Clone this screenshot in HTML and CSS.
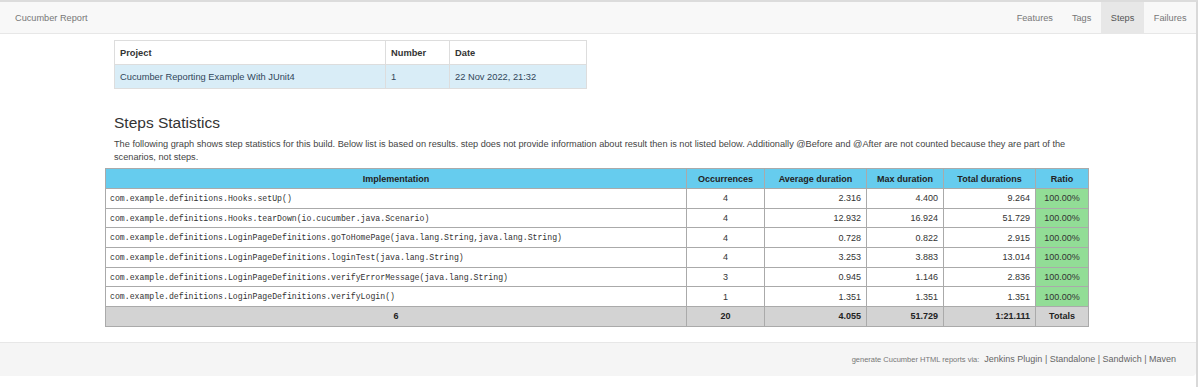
FILE: index.html
```html
<!DOCTYPE html>
<html>
<head>
<meta charset="utf-8">
<link rel="stylesheet" href="styles.css">
</head>
<body>
<div class="page">
  <nav class="navbar">
    <span class="brand">Cucumber Report</span>
    <ul class="nav">
      <li><a>Features</a></li>
      <li><a>Tags</a></li>
      <li class="active"><a>Steps</a></li>
      <li><a>Failures</a></li>
    </ul>
  </nav>

  <section class="report">
    <table class="project">
      <thead>
        <tr><th class="c-proj">Project</th><th class="c-num">Number</th><th class="c-date">Date</th></tr>
      </thead>
      <tbody>
        <tr class="info"><td>Cucumber Reporting Example With JUnit4</td><td>1</td><td>22 Nov 2022, 21:32</td></tr>
      </tbody>
    </table>
  </section>

  <section class="intro">
    <h2>Steps Statistics</h2>
    <p>The following graph shows step statistics for this build. Below list is based on results. step does not provide information about result then is not listed below. Additionally @Before and @After are not counted because they are part of the scenarios, not steps.</p>
  </section>

  <section class="stats-wrap">
    <table class="stats">
      <thead>
        <tr>
          <th class="w-impl">Implementation</th>
          <th class="w-occ">Occurrences</th>
          <th class="w-avg">Average duration</th>
          <th class="w-max">Max duration</th>
          <th class="w-tot">Total durations</th>
          <th class="w-ratio">Ratio</th>
        </tr>
      </thead>
      <tbody>
        <tr><td class="loc">com.example.definitions.Hooks.setUp()</td><td class="ctr">4</td><td class="num">2.316</td><td class="num">4.400</td><td class="num">9.264</td><td class="passed">100.00%</td></tr>
        <tr><td class="loc">com.example.definitions.Hooks.tearDown(io.cucumber.java.Scenario)</td><td class="ctr">4</td><td class="num">12.932</td><td class="num">16.924</td><td class="num">51.729</td><td class="passed">100.00%</td></tr>
        <tr><td class="loc">com.example.definitions.LoginPageDefinitions.goToHomePage(java.lang.String,java.lang.String)</td><td class="ctr">4</td><td class="num">0.728</td><td class="num">0.822</td><td class="num">2.915</td><td class="passed">100.00%</td></tr>
        <tr><td class="loc">com.example.definitions.LoginPageDefinitions.loginTest(java.lang.String)</td><td class="ctr">4</td><td class="num">3.253</td><td class="num">3.883</td><td class="num">13.014</td><td class="passed">100.00%</td></tr>
        <tr><td class="loc">com.example.definitions.LoginPageDefinitions.verifyErrorMessage(java.lang.String)</td><td class="ctr">3</td><td class="num">0.945</td><td class="num">1.146</td><td class="num">2.836</td><td class="passed">100.00%</td></tr>
        <tr><td class="loc">com.example.definitions.LoginPageDefinitions.verifyLogin()</td><td class="ctr">1</td><td class="num">1.351</td><td class="num">1.351</td><td class="num">1.351</td><td class="passed">100.00%</td></tr>
      </tbody>
      <tfoot>
        <tr><td class="ctr">6</td><td class="ctr">20</td><td class="num">4.055</td><td class="num">51.729</td><td class="num">1:21.111</td><td class="ctr">Totals</td></tr>
      </tfoot>
    </table>
  </section>

  <footer class="footer">
    <span class="gen">generate Cucumber HTML reports via:</span>
    <span class="links"><a>Jenkins Plugin</a> | <a>Standalone</a> | <a>Sandwich</a> | <a>Maven</a></span>
  </footer>
</div>
</body>
</html>
```

FILE: styles.css
```css
html, body {
  margin: 0;
  padding: 0;
  background: #fff;
}
body {
  font-family: "Liberation Sans", Arial, sans-serif;
  color: #333;
  font-size: 9.3px;
  height: 387px;
  overflow: hidden;
}
.page {
  border-top: 2px solid #dcdcdc;
  border-right: 2px solid #d9d9d9;
  width: 1196px;
  height: 385px;
}
.navbar {
  display: flex;
  justify-content: space-between;
  align-items: stretch;
  height: 31px;
  background: #f8f8f8;
  border-bottom: 1px solid #e7e7e7;
}
.brand {
  display: flex;
  align-items: center;
  padding-left: 15px;
  font-size: 9.2px;
  color: #777;
}
.nav {
  display: flex;
  list-style: none;
  margin: 0;
  padding: 0;
}
.nav li {
  display: flex;
}
.nav a {
  display: flex;
  align-items: center;
  padding: 0 9.5px;
  font-size: 9.2px;
  color: #777;
}
.nav li.active a {
  background: #e7e7e7;
  color: #555;
  padding: 0 10px;
}

.report {
  padding: 6px 0 0 114px;
}
table {
  border-collapse: collapse;
  border-spacing: 0;
}
.project {
  width: 473px;
  border: 1px solid #ddd;
  font-size: 9.3px;
}
.project th, .project td {
  text-align: left;
  padding: 0 5px;
  border: 1px solid #ddd;
  height: 23px;
  vertical-align: middle;
}
.project th {
  font-weight: bold;
  color: #333;
}
.project .c-proj { width: 260px; }
.project .c-num { width: 53px; }
.project tr.info td {
  background: #d9edf7;
  color: #31465a;
}

.intro {
  padding: 24px 0 0 114px;
}
.intro h2 {
  margin: 0;
  font-weight: normal;
  font-size: 15.5px;
  color: #333;
  line-height: 20px;
}
.intro p {
  margin: 5px 0 0;
  width: 975px;
  font-size: 9.2px;
  line-height: 12.5px;
  color: #444;
}

.stats-wrap {
  padding: 5px 0 0 105px;
}
.stats {
  width: 984px;
  border: 1px solid #999;
  font-size: 9px;
  table-layout: fixed;
}
.stats th, .stats td {
  border: 1px solid #aaa;
  height: 18.7px;
  padding: 0 5px;
  vertical-align: middle;
  white-space: nowrap;
}
.stats th {
  background: #66ccee;
  color: #222;
  font-weight: bold;
  text-align: center;
  height: 19px;
}
.stats .w-impl { width: 570px; }
.stats .w-occ { width: 67px; }
.stats .w-avg { width: 91px; }
.stats .w-max { width: 66px; }
.stats .w-tot { width: 81px; }
.stats .w-ratio { width: 42px; }
.stats td.loc {
  font-family: "Liberation Mono", "DejaVu Sans Mono", monospace;
  font-size: 8.2px;
  color: #333;
  padding-left: 4px;
}
.stats td.ctr { text-align: center; }
.stats td.num { text-align: right; }
.stats td.passed {
  background: #92dd96;
  text-align: center;
}
.stats tbody td { background-color: #fff; }
.stats tbody td.passed { background: #92dd96; }
.stats tfoot td {
  background: #d3d3d3;
  font-weight: bold;
  color: #222;
}

.footer {
  margin-top: 15px;
  height: 33px;
  background: #f5f5f5;
  border-top: 1px solid #e7e7e7;
  border-radius: 0 0 4px 0;
  display: flex;
  justify-content: flex-end;
  align-items: center;
  padding-right: 20px;
  color: #777;
}
.footer .gen {
  font-size: 7.5px;
  margin-right: 5px;
}
.footer .links {
  font-size: 9px;
  color: #666;
}
.footer a { color: #666; }
```
